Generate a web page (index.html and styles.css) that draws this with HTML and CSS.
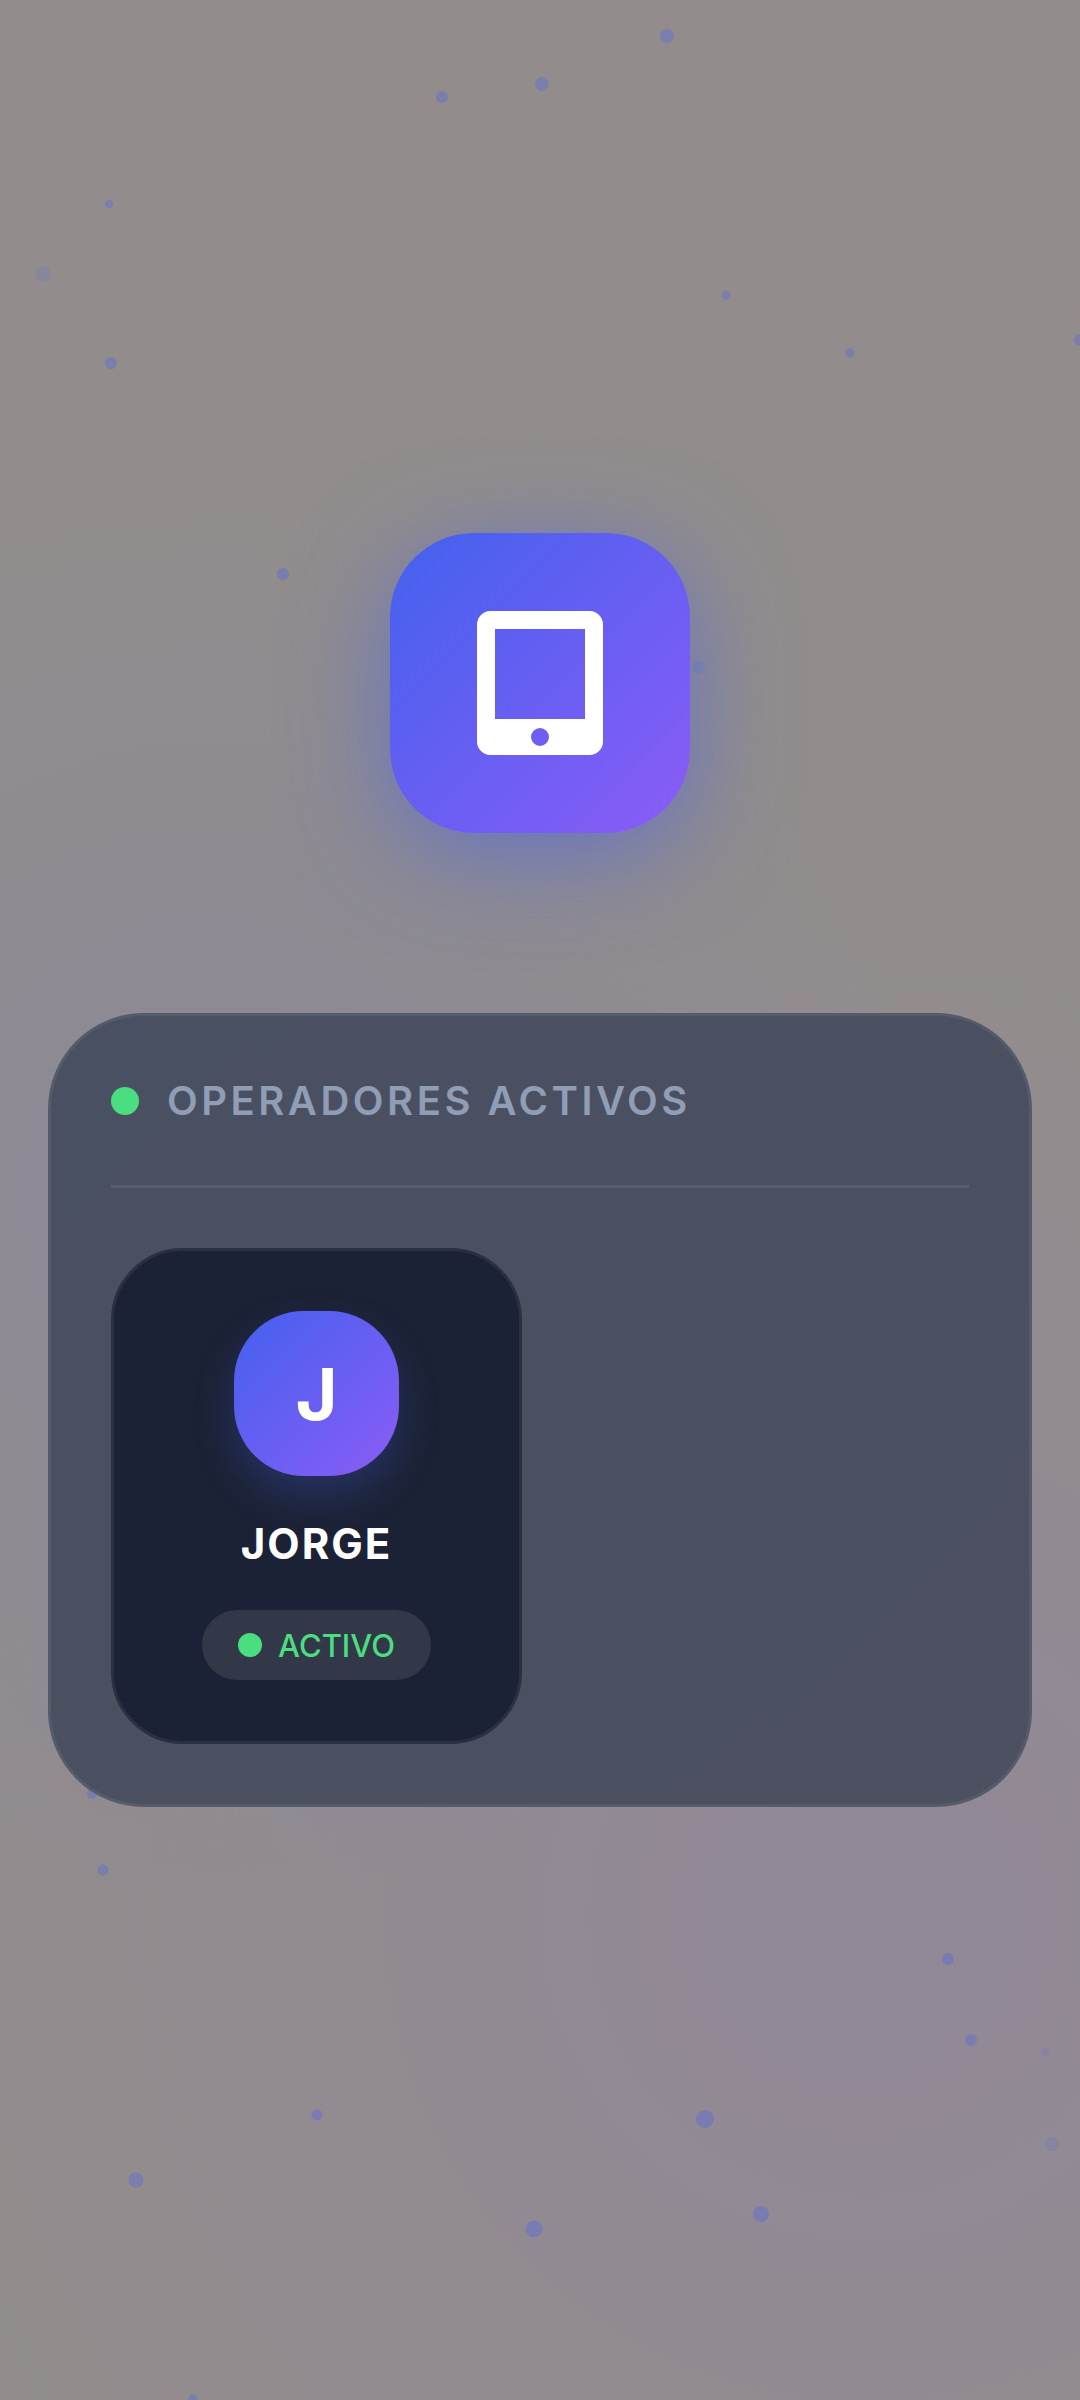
FILE: index.html
```html
<!DOCTYPE html>
<html lang="es">
    <head>
        <meta charset="utf-8">
        <title>Operadores activos</title>
        <link rel="stylesheet" href="styles.css">
    </head>

    <body>
        <svg class="particles" viewBox="0 0 1080 2400" aria-hidden="true">
            <circle cx="667" cy="36" r="7"/>
            <circle cx="542" cy="84" r="7"/>
            <circle cx="442" cy="97" r="6"/>
            <circle cx="109" cy="204" r="4"/>
            <circle cx="43" cy="274" r="7.5" class="faint"/>
            <circle cx="726" cy="295" r="4.5"/>
            <circle cx="850" cy="353" r="4.5"/>
            <circle cx="111" cy="363" r="6"/>
            <circle cx="1080" cy="340" r="6"/>
            <circle cx="283" cy="574" r="6"/>
            <circle cx="699" cy="667" r="6.5" class="faint"/>
            <circle cx="92" cy="1794" r="5"/>
            <circle cx="103" cy="1870" r="5.5"/>
            <circle cx="948" cy="1959" r="6"/>
            <circle cx="971" cy="2040" r="6"/>
            <circle cx="1045" cy="2052" r="4" class="faint"/>
            <circle cx="317" cy="2115" r="5.5"/>
            <circle cx="705" cy="2119" r="9"/>
            <circle cx="1052" cy="2144" r="7" class="faint"/>
            <circle cx="136" cy="2180" r="7.5"/>
            <circle cx="761" cy="2214" r="8"/>
            <circle cx="534" cy="2229" r="8.5"/>
            <circle cx="193" cy="2399" r="4.5"/>
        </svg>

        <div class="container">
            <div class="logo">
                <svg class="logo-icon" viewBox="0 0 448 512">
                    <path fill-rule="evenodd" d="M48 0H400a48 48 0 0 1 48 48V464a48 48 0 0 1-48 48H48a48 48 0 0 1-48-48V48A48 48 0 0 1 48 0zM64 64V384H384V64zM224 416a32 32 0 1 0 0 64a32 32 0 1 0 0-64z"/>
                </svg>
            </div>

            <section class="panel">
                <div class="panel-header">
                    <span class="dot-big"></span>
                    <h1>OPERADORES ACTIVOS</h1>
                </div>

                <div class="operators">
                    <div class="operator">
                        <div class="avatar">J</div>
                        <div class="name">JORGE</div>
                        <div class="status">
                            <span class="dot-small"></span>
                            ACTIVO
                        </div>
                    </div>
                </div>
            </section>
        </div>
    </body>
</html>
```

FILE: styles.css
```css
html, body {
    margin: 0;
    height: 2400px;
    overflow: hidden;
}

body {
    position: relative;
    font-family: Inter, "Noto Sans", sans-serif;
    background-color: #928d8c;
    background-image:
        radial-gradient(circle at 20% 50%, rgba(100, 115, 210, 0.16), transparent 48%),
        radial-gradient(circle at 80% 80%, rgba(139, 92, 246, 0.1), transparent 48%);
}

.particles {
    position: absolute;
    left: 0;
    top: 0;
    width: 1080px;
    height: 2400px;
    fill: #4361ee;
    fill-opacity: 0.32;
}

.particles .faint {
    fill-opacity: 0.14;
}

.container {
    position: relative;
    display: flex;
    flex-direction: column;
    align-items: center;
    padding: 533px 48px 0;
}

.logo {
    display: flex;
    align-items: center;
    justify-content: center;
    width: 300px;
    height: 300px;
    border-radius: 84px;
    background: linear-gradient(135deg, #4361ee, #8b5cf6);
    box-shadow: 0 20px 100px rgba(67, 97, 238, 0.55);
}

.logo-icon {
    width: 126px;
    height: 144px;
    fill: white;
}

.panel {
    box-sizing: border-box;
    width: 984px;
    margin-top: 180px;
    padding: 60px;
    border: 3px solid #565b6c;
    border-radius: 96px;
    background: linear-gradient(135deg, #495061, #4c5060);
}

.panel-header {
    display: flex;
    align-items: center;
    gap: 28px;
    padding-bottom: 60px;
    border-bottom: 3px solid #5a5e6e;
}

.dot-big {
    width: 28px;
    height: 28px;
    border-radius: 50%;
    background-color: #4ade80;
}

h1 {
    margin: 0;
    font-size: 40px;
    font-weight: 600;
    letter-spacing: 3.5px;
    color: #8f9db5;
}

.operators {
    display: flex;
    padding-top: 60px;
}

.operator {
    box-sizing: border-box;
    display: flex;
    flex-direction: column;
    align-items: center;
    width: 411px;
    height: 496px;
    padding-top: 60px;
    border: 3px solid #2a3041;
    border-radius: 72px;
    background-color: #1c2235;
}

.avatar {
    display: flex;
    align-items: center;
    justify-content: center;
    width: 165px;
    height: 165px;
    border-radius: 70px;
    background: linear-gradient(135deg, #4361ee, #8b5cf6);
    box-shadow: 0 20px 40px rgba(67, 97, 238, 0.24);
    font-size: 72px;
    font-weight: 700;
    color: white;
}

.name {
    margin-top: 42px;
    font-size: 42px;
    font-weight: 700;
    letter-spacing: 2px;
    color: white;
}

.status {
    display: flex;
    align-items: center;
    gap: 16px;
    height: 70px;
    margin-top: 41px;
    padding: 0 36px;
    border-radius: 35px;
    background-color: #333848;
    font-size: 31px;
    font-weight: 500;
    color: #4ade80;
}

.dot-small {
    width: 24px;
    height: 24px;
    border-radius: 50%;
    background-color: #4ade80;
}
```
